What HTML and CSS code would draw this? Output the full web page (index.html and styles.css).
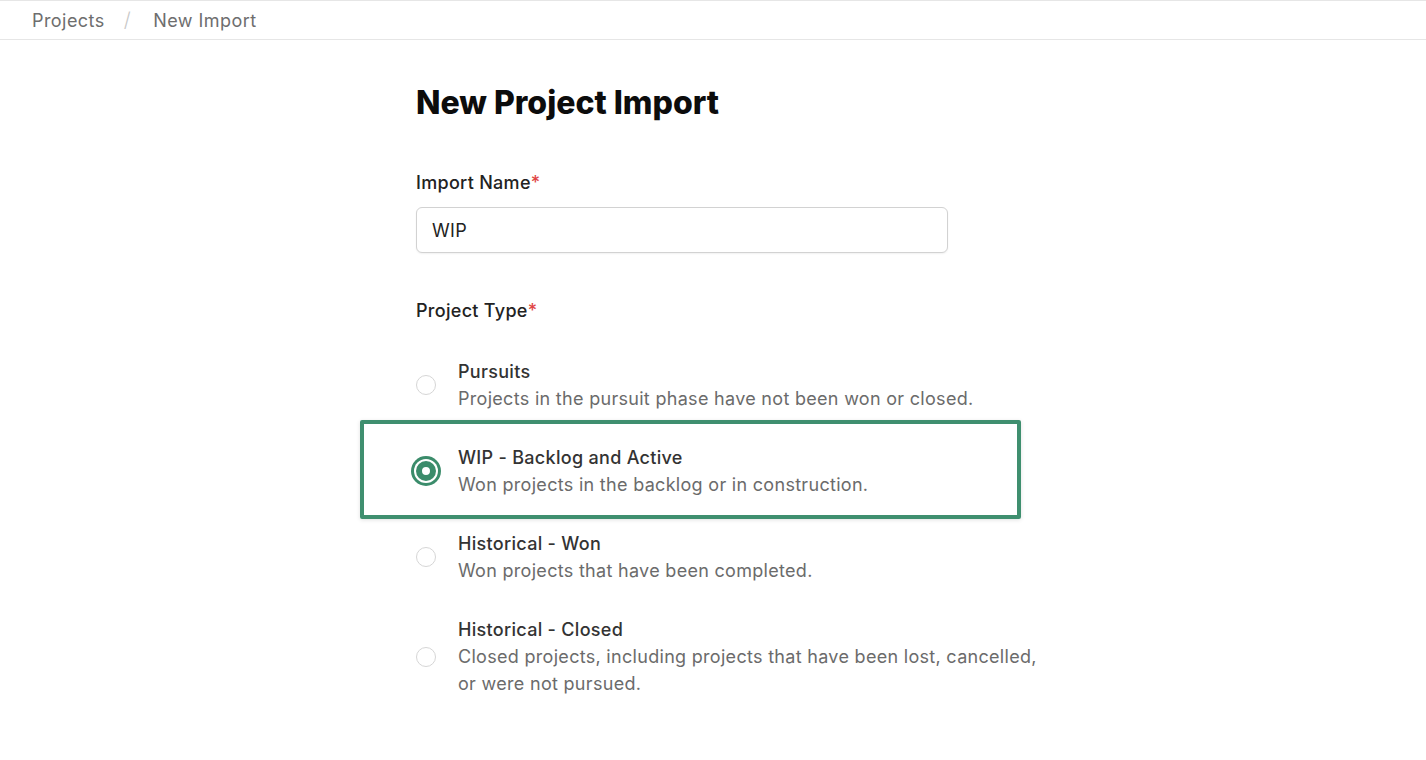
FILE: index.html
```html
<!DOCTYPE html>
<html lang="en">
<head>
    <meta charset="UTF-8">
    <meta name="viewport" content="width=device-width, initial-scale=1.0">
    <title>New Import</title>
    <link rel="stylesheet" href="styles.css">
</head>
<body>
    <header class="topbar">
        <nav class="crumbs">
            <a href="#">Projects</a>
            <span class="sep">/</span>
            <span class="current">New Import</span>
        </nav>
    </header>

    <main class="content">
        <h1>New Project Import</h1>

        <div class="field">
            <label class="label" for="import-name">Import Name<span class="req">*</span></label>
            <input id="import-name" class="text-input" type="text" value="WIP">
        </div>

        <div class="field">
            <div class="label">Project Type<span class="req">*</span></div>
            <div class="options">
                <label class="option">
                    <span class="radio"></span>
                    <span class="option-text">
                        <span class="option-title">Pursuits</span>
                        <span class="option-desc">Projects in the pursuit phase have not been won or closed.</span>
                    </span>
                </label>
                <label class="option selected">
                    <span class="radio checked"></span>
                    <span class="option-text">
                        <span class="option-title">WIP - Backlog and Active</span>
                        <span class="option-desc">Won projects in the backlog or in construction.</span>
                    </span>
                    <span class="highlight"></span>
                </label>
                <label class="option">
                    <span class="radio"></span>
                    <span class="option-text">
                        <span class="option-title">Historical - Won</span>
                        <span class="option-desc">Won projects that have been completed.</span>
                    </span>
                </label>
                <label class="option">
                    <span class="radio"></span>
                    <span class="option-text">
                        <span class="option-title">Historical - Closed</span>
                        <span class="option-desc">Closed projects, including projects that have been lost, cancelled, or were not pursued.</span>
                    </span>
                </label>
            </div>
        </div>
    </main>
</body>
</html>
```

FILE: styles.css
```css
body { font-family: Inter, "Noto Sans", sans-serif; margin: 0; padding: 0; background-color: #fff; color: #222; }

.topbar { height: 38px; border-top: 1px solid #e6e6e6; border-bottom: 1px solid #e6e6e6; display: flex; align-items: center; padding: 0 32px; }
.crumbs { display: flex; align-items: center; font-size: 18px; letter-spacing: 0.45px; color: #6e6e6e; }
.crumbs a { color: #6e6e6e; text-decoration: none; }
.crumbs .sep { color: #c8c8c8; font-weight: 300; margin: 0 22px 0 19px; font-size: 20px; }

.content { width: 594px; margin: 0 auto; padding: 45px 0 0 0; }
.content h1 { font-size: 32px; line-height: 36px; font-weight: 800; color: #0c0c0c; margin: 0 0 50px 0; }

.field { margin-bottom: 46px; }
.label { display: block; font-size: 18px; line-height: 24px; font-weight: 500; letter-spacing: 0.3px; color: #222; margin-bottom: 12px; }
.req { color: #e04545; }

.text-input { width: 532px; height: 46px; box-sizing: border-box; border: 1px solid #d2d2d2; border-radius: 6px; padding: 0 15px; font-family: inherit; font-size: 18px; letter-spacing: 0.3px; color: #222; box-shadow: 0 1px 2px rgba(0,0,0,0.06); outline: none; }

.options { width: 640px; display: flex; flex-direction: column; gap: 32px; padding-top: 23px; }
.option { display: flex; align-items: center; gap: 22px; position: relative; cursor: pointer; }
.radio { flex: none; width: 20px; height: 20px; box-sizing: border-box; border: 1px solid #d6d6d6; border-radius: 50%; background: #fff; }
.radio.checked { border: 6px solid #3b8c6b; box-shadow: 0 0 0 2px #fff, 0 0 0 5px #3b8c6b; }
.option-text { display: flex; flex-direction: column; max-width: 590px; font-size: 18px; line-height: 27px; letter-spacing: 0.3px; }
.option-title { font-weight: 500; color: #333; }
.option-desc { color: #6b6b6b; }

.highlight { position: absolute; left: -56px; top: -24px; width: 661px; height: 99px; box-sizing: border-box; border: 4px solid #3f8f6f; border-radius: 2px; box-shadow: 0 1px 4px rgba(0,0,0,0.12); pointer-events: none; }
```
